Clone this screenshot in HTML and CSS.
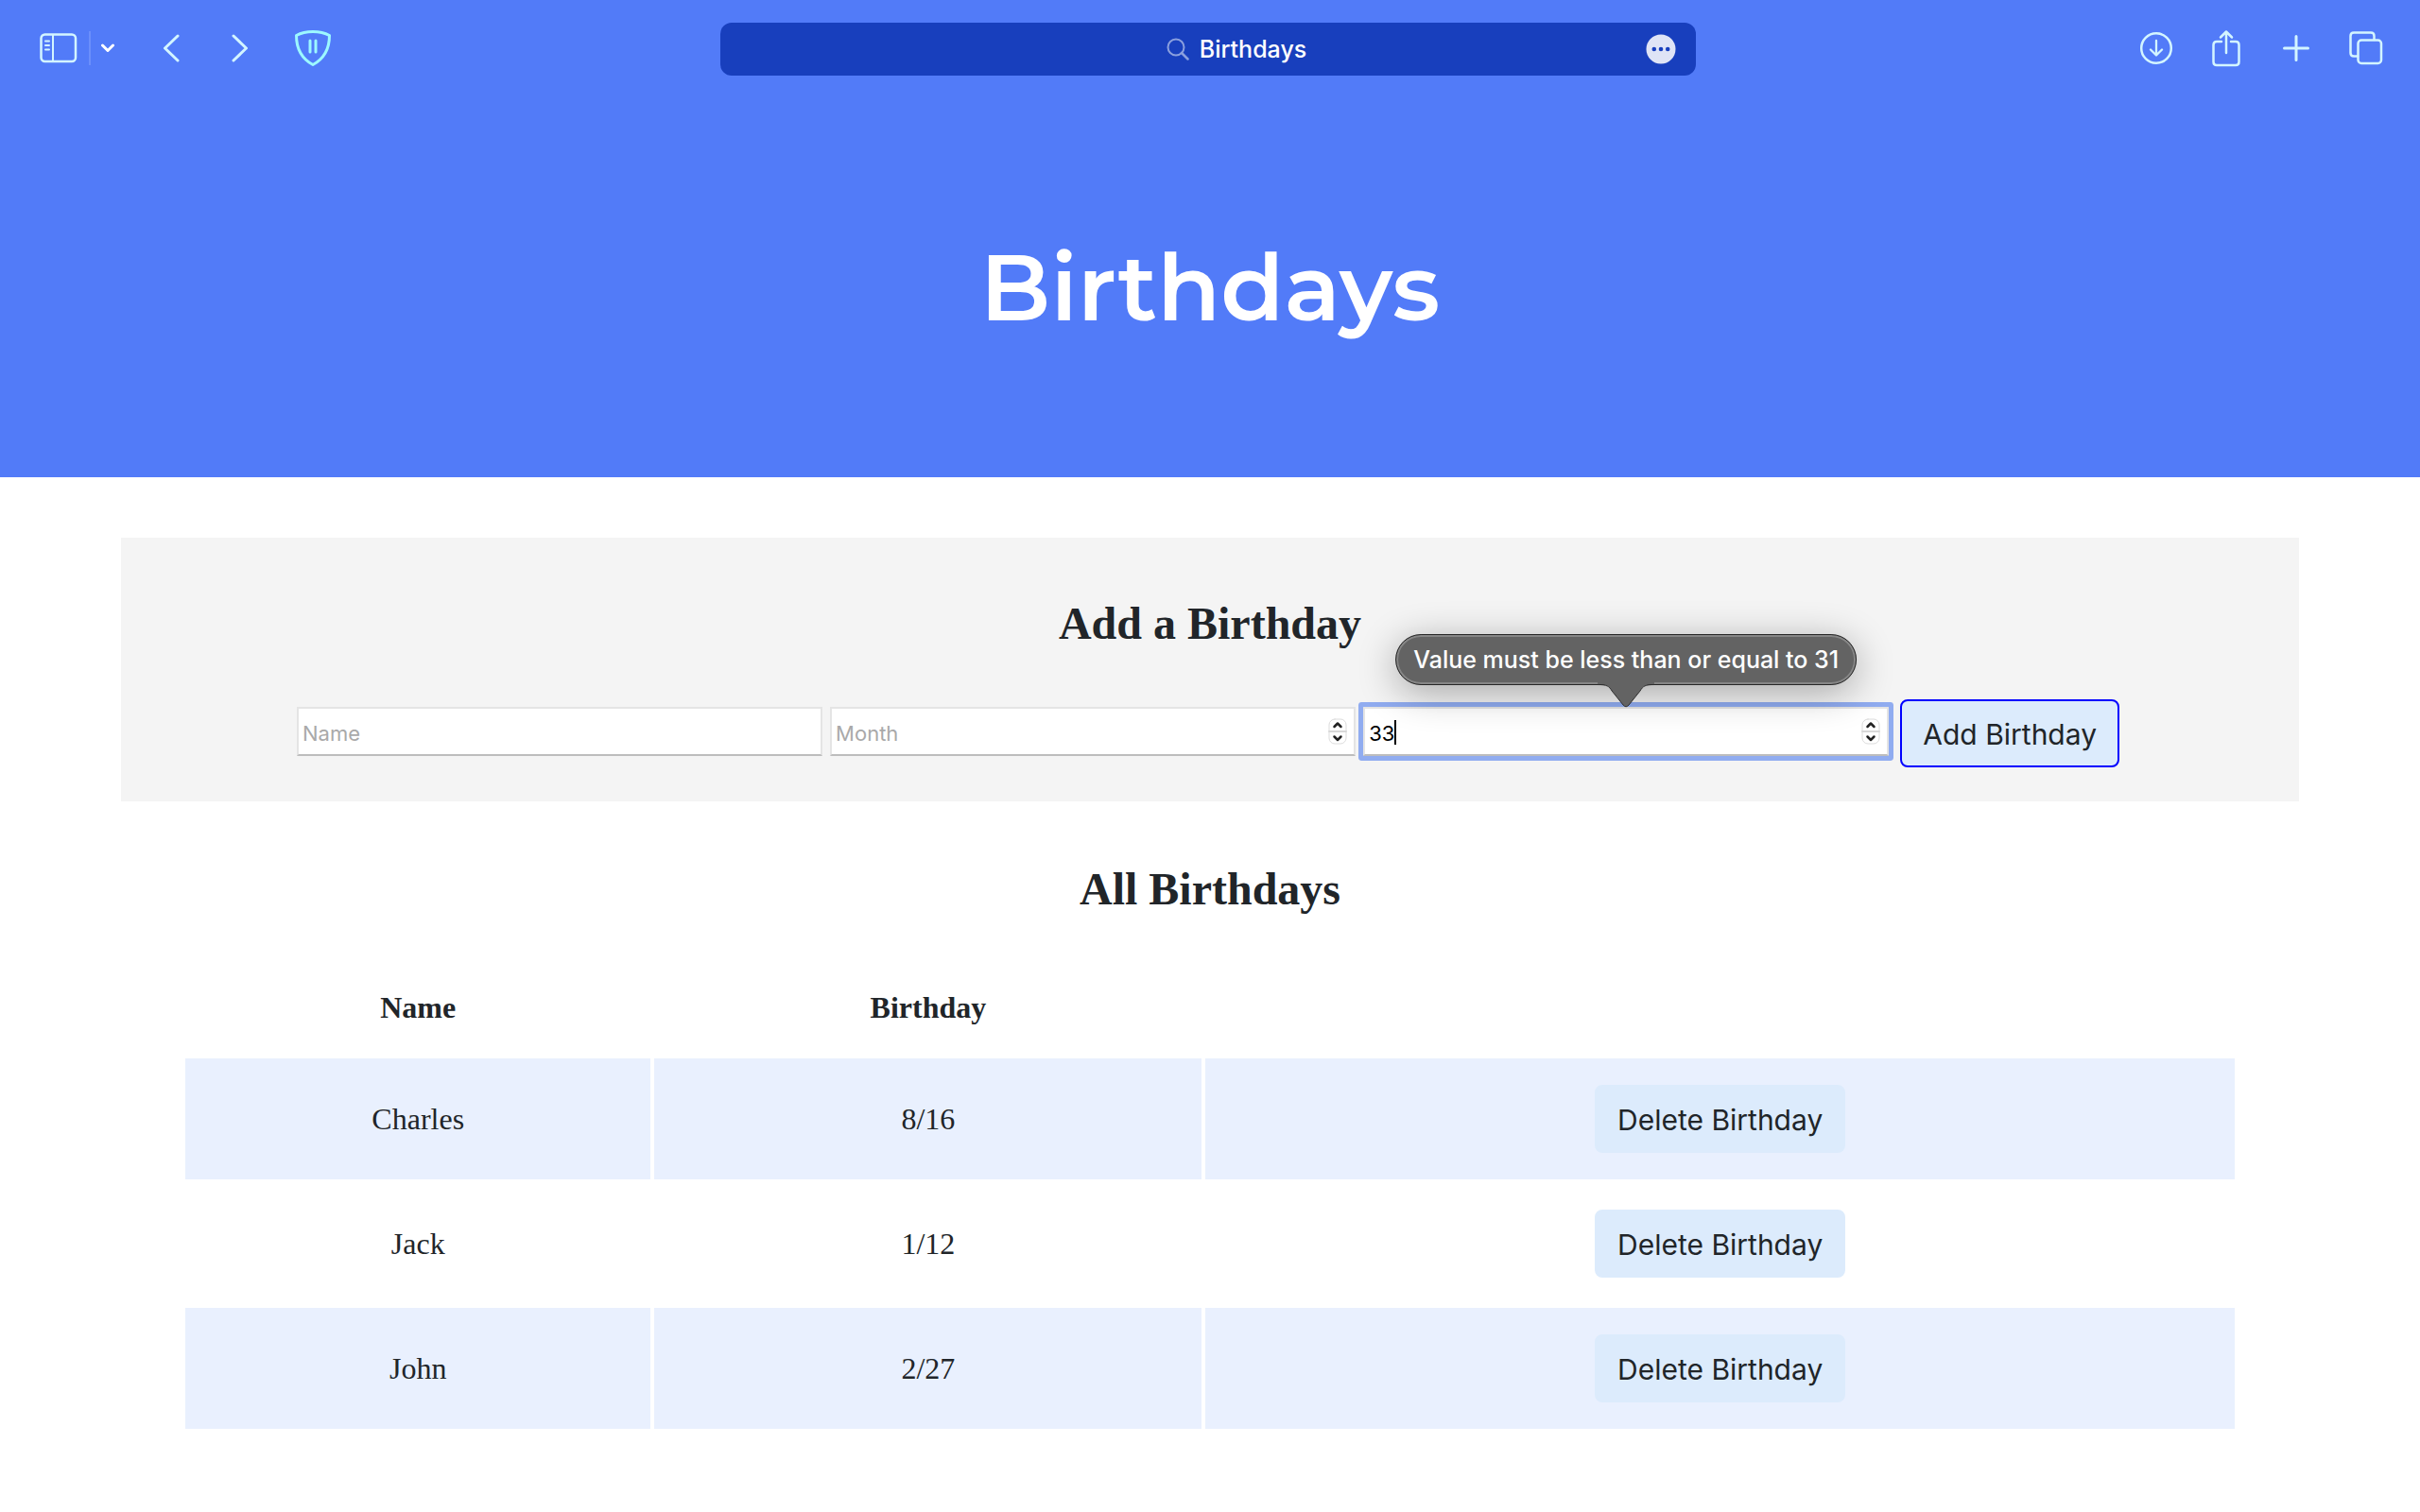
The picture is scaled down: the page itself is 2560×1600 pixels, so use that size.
FILE: index.html
```html
<!DOCTYPE html>
<html lang="en">
<head>
<meta charset="utf-8">
<meta name="viewport" content="width=device-width, initial-scale=1">
<title>Birthdays</title>
<link rel="stylesheet" href="styles.css">
</head>
<body>
<div class="toolbar">
  <div class="tools tools-left">
    <button class="tool tool-sidebar" type="button" aria-label="Show sidebar">
      <svg width="40" height="32" viewBox="0 0 40 32"><rect x="1.5" y="1.5" width="36.500" height="28.500" rx="4"/><path d="M14 2v28M6 8.500h4M6 13h4M6 17.500h4" stroke-width="2"/></svg>
    </button>
    <span class="divider"></span>
    <button class="tool tool-menu" type="button" aria-label="Tab groups">
      <svg width="14" height="10" viewBox="0 0 14 10"><path d="M1.500 2 7 7.500 12.500 2" stroke-width="3"/></svg>
    </button>
    <button class="tool tool-nav" type="button" aria-label="Back">
      <svg width="18" height="30" viewBox="0 0 18 30"><path d="M16 2 2.500 15 16 28" stroke-width="3"/></svg>
    </button>
    <button class="tool tool-nav" type="button" aria-label="Forward">
      <svg width="18" height="30" viewBox="0 0 18 30"><path d="M2 2l13.500 13L2 28" stroke-width="3"/></svg>
    </button>
    <button class="tool tool-shield" type="button" aria-label="Content blocker">
      <svg width="40" height="38" viewBox="0 0 40 38"><path d="M20 1.500C26 1.500 32 2.500 37.500 5.500 37.500 19 32 30 20 36.500 8 30 2.500 19 2.500 5.500 8 2.500 14 1.500 20 1.500Z"/><path d="M17 11v12M23 11v12" stroke-width="3"/></svg>
    </button>
  </div>
  <div class="address">
    <svg class="search" width="24" height="24" viewBox="0 0 24 24"><circle cx="10" cy="10" r="8.500"/><path d="M16 16l6.500 6.500" stroke-width="2.500"/></svg>
    <input class="address-text" type="text" value="Birthdays" aria-label="Address" size="8">
    <button class="more" type="button" aria-label="Page options">
      <svg width="32" height="32" viewBox="0 0 32 32"><circle cx="16" cy="16" r="15.500" fill="#dfe4f6"/><g fill="#183fbd"><circle cx="8.800" cy="16" r="2.300"/><circle cx="16" cy="16" r="2.300"/><circle cx="23.200" cy="16" r="2.300"/></g></svg>
    </button>
  </div>
  <div class="tools tools-right">
    <button class="tool tool-page" type="button" aria-label="Downloads">
      <svg width="36" height="36" viewBox="0 0 36 36"><circle cx="18" cy="18" r="15.800"/><path d="M18 10v15M12 19.500l6 6 6-6" stroke-width="2.300"/></svg>
    </button>
    <button class="tool tool-page" type="button" aria-label="Share">
      <svg width="32" height="42" viewBox="0 0 32 42"><path d="M11 14H6q-3.500 0-3.500 3.500v18Q2.500 39 6 39h20q3.500 0 3.500-3.500v-18Q29.500 14 26 14h-5M16 26V4M10 9.500l6-6 6 6"/></svg>
    </button>
    <button class="tool tool-page" type="button" aria-label="New tab">
      <svg width="28" height="28" viewBox="0 0 28 28"><path d="M14 1.500v25M1.500 14h25" stroke-width="3"/></svg>
    </button>
    <button class="tool tool-page" type="button" aria-label="Tab overview">
      <svg width="36" height="36" viewBox="0 0 36 36"><rect x="9.500" y="9.500" width="24.500" height="24.500" rx="3.500"/><path d="M9 26.500H5q-3.500 0-3.500-3.500V5Q1.500 1.500 5 1.500h18Q26.500 1.500 26.500 5v4"/></svg>
    </button>
  </div>
</div>
<header class="hero"><h1>Birthdays</h1></header>
<main>
  <section class="panel">
    <h2>Add a Birthday</h2>
    <form class="form" novalidate>
      <div class="field">
        <input type="text" placeholder="Name" aria-label="Name">
      </div>
      <div class="field">
        <input type="number" placeholder="Month" aria-label="Month" min="1" max="12">
        <svg class="stepper" width="20" height="28" viewBox="0 0 20 28"><rect x="1" y="1" width="18" height="26" rx="6"/><path class="split" d="M1 14h18"/><path d="M6.500 9 10 5.500 13.500 9M6.500 19.500 10 23l3.500-3.500"/></svg>
      </div>
      <div class="field field-active">
        <input type="number" value="33" placeholder="Day" aria-label="Day" aria-describedby="day-error" min="1" max="31">
        <span class="caret"></span>
        <svg class="stepper" width="20" height="28" viewBox="0 0 20 28"><rect x="1" y="1" width="18" height="26" rx="6"/><path class="split" d="M1 14h18"/><path d="M6.500 9 10 5.500 13.500 9M6.500 19.500 10 23l3.500-3.500"/></svg>
        <div class="tooltip" id="day-error" role="alert">Value must be less than or equal to 31
          <svg class="tail" width="60" height="28" viewBox="0 0 60 28"><path class="tail-fill" d="M0 0H60V3C50 3 48 5 45 10L33 25Q30 28 27 25L15 10C12 5 10 3 0 3Z"/><path class="tail-edge" d="M0 3.500C10 3.500 12 5 15 10L27 25Q30 28.500 33 25L45 10C48 5 50 3.500 60 3.500"/></svg>
        </div>
      </div>
      <button class="btn btn-add" type="submit">Add Birthday</button>
    </form>
  </section>
  <section class="list">
    <h2>All Birthdays</h2>
    <table>
      <colgroup><col class="col-name"><col class="col-date"><col class="col-action"></colgroup>
      <thead><tr><th scope="col">Name</th><th scope="col">Birthday</th><td></td></tr></thead>
      <tbody>
        <tr><td>Charles</td><td>8/16</td><td><button class="btn" type="button">Delete Birthday</button></td></tr>
        <tr><td>Jack</td><td>1/12</td><td><button class="btn" type="button">Delete Birthday</button></td></tr>
        <tr><td>John</td><td>2/27</td><td><button class="btn" type="button">Delete Birthday</button></td></tr>
      </tbody>
    </table>
  </section>
</main>
</body>
</html>
```
FILE: styles.css
```css
* { box-sizing: border-box; }

body {
  margin: 0;
  background: #fff;
  color: #212529;
  font: 32px/36px "Liberation Serif", "Times New Roman", serif;
}

button, input { font-family: Inter, "Liberation Sans", sans-serif; }

svg {
  display: block;
  flex: none;
  fill: none;
  stroke-linecap: round;
  stroke-linejoin: round;
}

/* Browser toolbar */
.toolbar {
  display: grid;
  grid-template-columns: minmax(0, 762fr) minmax(0, 1032fr) minmax(0, 766fr);
  align-items: center;
  height: 104px;
  background: #527bf8;
}

.tools { display: flex; align-items: center; padding-bottom: 2px; }
.tools-left { padding-left: 29px; }
.tools-right { justify-content: flex-end; padding-right: 20px; }

.tool {
  display: flex;
  align-items: center;
  justify-content: center;
  height: 56px;
  padding: 0;
  border: 0;
  background: none;
}
.tool svg { stroke: #d3f5ff; stroke-width: 2.5; }
.tool-sidebar { width: 65px; }
.tool-menu { width: 36px; margin-right: 12px; }
.tool-nav { width: 73px; }
.tool-shield { width: 81px; }
.tool-page { width: 74px; }
.tool-menu svg { stroke: #fff; }
.tool-shield svg { stroke: #9cf8ff; stroke-width: 3; }

.divider { width: 2px; height: 36px; background: #6b8ffb; }

.address {
  display: grid;
  grid-template-columns: minmax(0, 1fr) auto auto minmax(0, 1fr);
  align-items: center;
  gap: 11px;
  height: 56px;
  padding-right: 21px;
  padding-left: 81px;
  border-radius: 12px;
  background: #183fbd;
}
.search { grid-column: 2; stroke: #8ba0de; stroke-width: 2; }
.address-text {
  field-sizing: content;
  padding: 0;
  border: 0;
  background: none;
  color: #fff;
  font-size: 25px;
  font-weight: 500;
  line-height: 32px;
}
.more { justify-self: end; padding: 0; border: 0; background: none; }

/* Page header */
.hero {
  padding: 136px 0 137px;
  background: #527bf8;
  color: #fff;
  text-align: center;
}
h1 {
  margin: 0;
  font: 600 98px/128px Montserrat, Inter, sans-serif;
}

h2 { margin: 0; font-size: 48px; line-height: 56px; text-align: center; }

/* Entry form */
.panel {
  margin: 64px 5% 0;
  padding: 63px 0 36px;
  background: #f4f4f4;
}
.form {
  display: flex;
  align-items: center;
  gap: 8px;
  margin-top: 52px;
  padding: 0 190px 0 186px;
}
.field { position: relative; flex: 1 1 0; min-width: 0; margin-bottom: 4px; }
.field input {
  display: block;
  width: 100%;
  height: 52px;
  padding: 5px 4px 1px;
  border: 2px solid #e4e4e4;
  border-bottom-color: #bdbdbd;
  background: #fff;
  color: #000;
  font-size: 22px;
  line-height: 32px;
  appearance: textfield;
}
.field input::placeholder { color: #a9a9a9; opacity: 1; }
.field input::-webkit-inner-spin-button { appearance: none; }
.field-active input { border-radius: 1px; box-shadow: 0 0 0 5px #90acf0; }

.stepper { position: absolute; top: 12px; right: 9px; stroke: #222; stroke-width: 2.5; }
.stepper rect { fill: #fff; stroke: #dcdcdc; stroke-width: 1; }
.stepper .split { stroke: #d8d8d8; stroke-width: 2; }

.caret { position: absolute; top: 14px; left: 33px; width: 2px; height: 26px; background: #000; }

.tooltip {
  position: absolute;
  bottom: 75px;
  left: 50%;
  height: 54px;
  padding: 0 18px;
  transform: translateX(-50%);
  border: 1px solid #262626;
  border-radius: 27px;
  background: #636363;
  box-shadow: inset 0 0 0 2px #868686, 0 8px 40px rgba(0, 0, 0, .32);
  color: #fff;
  font: 500 25px/52px Inter, "Liberation Sans", sans-serif;
  white-space: nowrap;
}
.tail { position: absolute; top: 49px; left: calc(50% - 30px); }
.tail-fill { fill: #636363; }
.tail-edge { stroke: #303030; stroke-width: 1; }

.btn {
  height: 72px;
  padding: 2px 22px 0;
  border: 2px solid #dcebfc;
  border-radius: 8px;
  background: #dcebfc;
  color: #212529;
  font-size: 30px;
  line-height: 44px;
  white-space: nowrap;
}
.btn-add { margin-left: 4px; border-color: #00f; }

/* Birthday table */
.list { padding: 65px 0 84px; }
table {
  width: 85%;
  margin: 43px auto 0;
  border-spacing: 4px;
  table-layout: fixed;
  text-align: center;
}
.col-name { width: 22.8%; }
.col-date { width: 26.8%; }
.col-action { width: 50.4%; }
th { height: 100px; padding: 0; }
tbody td { height: 128px; padding: 0; }
tbody tr:nth-child(odd) td { background: #e9f0fe; }
```
